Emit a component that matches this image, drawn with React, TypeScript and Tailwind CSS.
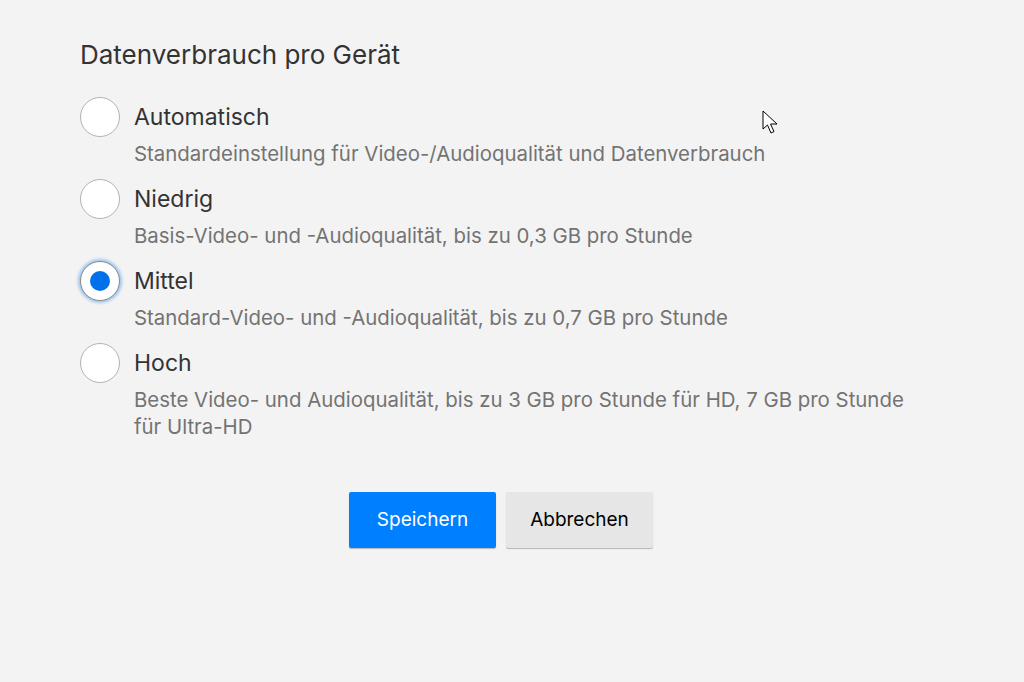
import React, { useState } from 'react';

const options = [
  { id: 'auto', label: 'Automatisch', desc: 'Standardeinstellung für Video-/Audioqualität und Datenverbrauch' },
  { id: 'low', label: 'Niedrig', desc: 'Basis-Video- und -Audioqualität, bis zu 0,3 GB pro Stunde' },
  { id: 'medium', label: 'Mittel', desc: 'Standard-Video- und -Audioqualität, bis zu 0,7 GB pro Stunde' },
  { id: 'high', label: 'Hoch', desc: 'Beste Video- und Audioqualität, bis zu 3 GB pro Stunde für HD, 7 GB pro Stunde für Ultra-HD' },
];

export default function App() {
  const [selected, setSelected] = useState('medium');

  return (
    <div className="relative min-h-[682px] w-full bg-[#f3f3f3] text-[#333]" style={{ fontFamily: 'Inter, "Liberation Sans", sans-serif' }}>
      <div className="w-[842px] pl-[80px] pt-[38px] box-content">
        <h1 className="text-[26px] leading-[34px] text-[#333] mb-[25px]">Datenverbrauch pro Gerät</h1>
        <div className="flex flex-col gap-[12px]">
          {options.map(opt => {
            const isSel = selected === opt.id;
            return (
              <div key={opt.id} className="cursor-pointer" onClick={() => setSelected(opt.id)}>
                <div className="flex items-center gap-[14px]">
                  <span
                    className={`flex h-[40px] w-[40px] shrink-0 items-center justify-center rounded-full border bg-white ${
                      isSel ? 'border-[#8a8a8a] shadow-[0_0_3px_2px_rgba(0,113,235,0.35)]' : 'border-[#b3b3b3]'
                    }`}
                  >
                    {isSel && <span className="h-[20px] w-[20px] rounded-full bg-[#0071eb]" />}
                  </span>
                  <span className="text-[23px] leading-[30px] text-[#333]">{opt.label}</span>
                </div>
                <p className="mt-[3px] pl-[54px] text-[20.4px] leading-[27px] text-[#737373]">{opt.desc}</p>
              </div>
            );
          })}
        </div>
        <div className="mt-[52px] flex justify-center gap-[10px]">
          <button className="h-[56px] w-[147px] rounded-[2px] bg-[#0080ff] text-[19px] text-white shadow-[0_1px_1px_rgba(0,0,0,0.25)]">
            Speichern
          </button>
          <button className="h-[56px] w-[147px] rounded-[2px] bg-[#e6e6e6] text-[19px] text-[#000] shadow-[0_1px_1px_rgba(0,0,0,0.25)]">
            Abbrechen
          </button>
        </div>
      </div>
      <svg className="absolute left-[762px] top-[110px]" width="18" height="26" viewBox="0 0 18 26">
        <path d="M1 1 L1 19 L5.5 15 L9 23 L12 21.5 L8.5 14 L15 14 Z" fill="#fff" stroke="#000" strokeWidth="1" strokeLinejoin="round" />
      </svg>
    </div>
  );
}
